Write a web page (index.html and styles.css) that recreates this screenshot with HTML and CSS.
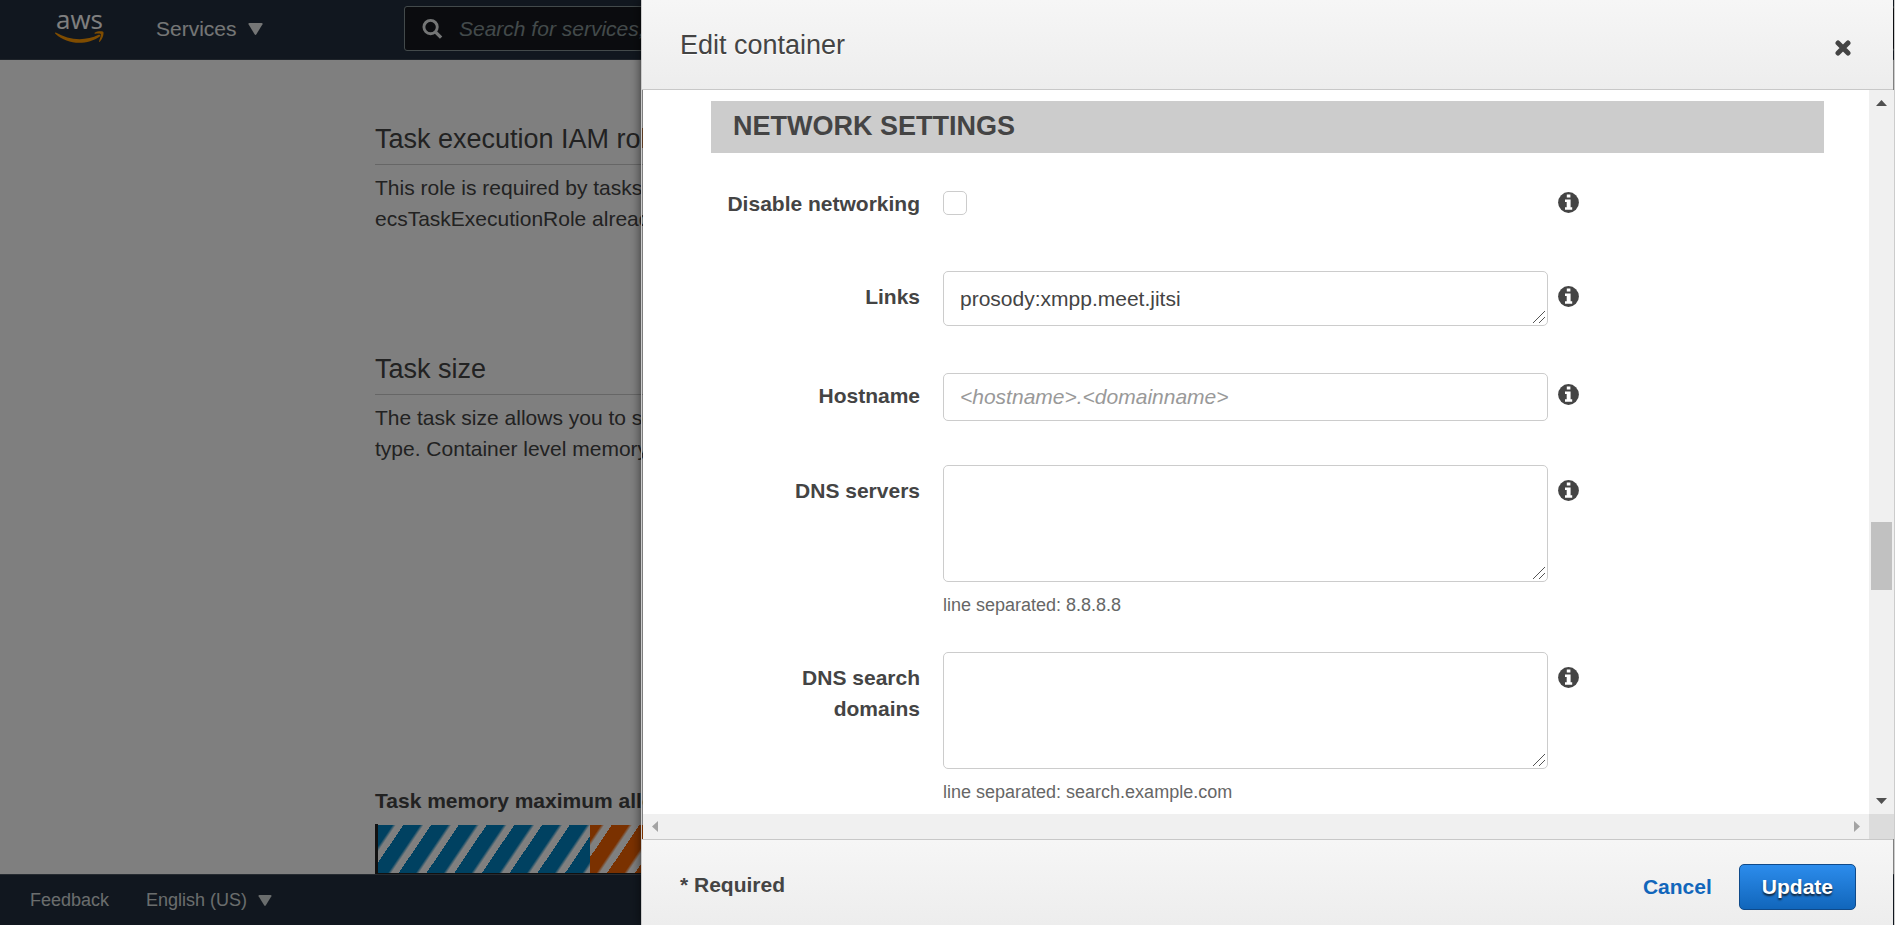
FILE: index.html
```html
<!DOCTYPE html>
<html lang="en">
<head>
<meta charset="utf-8">
<title>Edit container</title>
<meta name="viewport" content="width=device-width, initial-scale=1">
<link rel="stylesheet" href="styles.css">
</head>
<body>
<svg class="defs" aria-hidden="true">
  <symbol id="info" viewBox="0 0 21 21">
    <circle cx="10.500" cy="10.500" r="10.400" fill="#444"/>
    <path d="M8.800 2.600h3.600v3h-3.600zM7 7.400h5.600v7.800h1.600v2.600H7v-2.600h1.700V10H7z" fill="#fff"/>
  </symbol>
  <symbol id="caret" viewBox="0 0 15 12">
    <path d="M1.500 0h12q1.500 0 1 1.300L8.400 11.300q-.9 1.200-1.800 0L.5 1.300Q0 0 1.500 0z" fill="currentColor"/>
  </symbol>
</svg>

<div class="console">
  <header class="topbar">
    <a class="logo" href="#" aria-label="AWS home">
      <span class="logo-text">aws</span>
      <svg class="logo-smile" viewBox="0 0 50 13" aria-hidden="true">
        <path d="M.8 1.500C14 9.500 31 10.500 44.500 3.800c1.400-.7 2.400.6 1.200 1.600C33 14.500 13 14.500.4 2.700-.3 1.900.1 1.100.8 1.500z" fill="#ff9900"/>
        <path d="M40.500 1.700c2.600-1.900 8-1.900 8.800-.9.800 1.200-.4 7-3.400 9.900-.7.600-1.300.3-1-.5.900-2.200 2.400-6.200 1.800-7.100-.6-.9-3.600-.7-5.600-.5-.8.100-1.200-.4-.6-.9z" fill="#ff9900"/>
      </svg>
    </a>
    <button class="nav-button" type="button">Services <svg class="caret"><use href="#caret"/></svg></button>
    <label class="search">
      <svg class="search-icon" viewBox="0 0 22 22" aria-hidden="true"><circle cx="9" cy="9" r="7" fill="none" stroke="currentColor" stroke-width="3"/><path d="M14 14l6 6" stroke="currentColor" stroke-width="3.400"/></svg>
      <input class="search-input" type="search" aria-label="Search" placeholder="Search for services, features, marketplace products, and docs">
    </label>
  </header>

  <main class="page">
    <section class="block block-role">
      <h2 class="block-title">Task execution IAM role</h2>
      <p class="block-text">This role is required by tasks<br>ecsTaskExecutionRole already</p>
    </section>
    <section class="block block-size">
      <h2 class="block-title">Task size</h2>
      <p class="block-text">The task size allows you to set<br>type. Container level memory</p>
    </section>
    <section class="block">
      <h3 class="chart-title">Task memory maximum allocation</h3>
      <div class="chart"><div class="chart-used"></div><div class="chart-rest"></div></div>
    </section>
  </main>

  <footer class="bottombar">
    <a class="bottom-link" href="#">Feedback</a>
    <button class="bottom-link" type="button">English (US) <svg class="caret caret-small"><use href="#caret"/></svg></button>
  </footer>
</div>

<div class="backdrop"></div>

<div class="dialog" role="dialog" aria-labelledby="dialog-title">
  <header class="dialog-header">
    <h1 class="dialog-title" id="dialog-title">Edit container</h1>
    <button class="close" type="button" aria-label="Close">
      <svg class="close-icon" viewBox="0 0 16 16"><path d="M3 3l10 10M13 3L3 13" stroke="#444" stroke-width="5" stroke-linecap="round"/></svg>
    </button>
  </header>

  <div class="dialog-body">
    <form class="form" id="container-form">
      <h2 class="form-heading">NETWORK SETTINGS</h2>
      <div class="row row-check">
        <label class="label" for="disable">Disable networking</label>
        <div class="control"><input class="check" id="disable" type="checkbox"></div>
        <svg class="info"><use href="#info"/></svg>
      </div>
      <div class="row row-tall row-links">
        <label class="label" for="links">Links</label>
        <div class="control"><textarea class="field area area-short" id="links" rows="1">prosody:xmpp.meet.jitsi</textarea></div>
        <svg class="info"><use href="#info"/></svg>
      </div>
      <div class="row">
        <label class="label" for="hostname">Hostname</label>
        <div class="control"><input class="field" id="hostname" type="text" placeholder="&lt;hostname&gt;.&lt;domainname&gt;"></div>
        <svg class="info"><use href="#info"/></svg>
      </div>
      <div class="row row-tall row-hinted">
        <label class="label" for="dns">DNS servers</label>
        <div class="control"><textarea class="field area" id="dns"></textarea><p class="hint">line separated: 8.8.8.8</p></div>
        <svg class="info"><use href="#info"/></svg>
      </div>
      <div class="row row-tall row-hinted">
        <label class="label" for="domains">DNS search domains</label>
        <div class="control"><textarea class="field area" id="domains"></textarea><p class="hint">line separated: search.example.com</p></div>
        <svg class="info"><use href="#info"/></svg>
      </div>
    </form>
    <div class="vbar" aria-hidden="true">
      <svg class="bar-arrow" viewBox="0 0 25 25"><path d="M7 16L12.500 10 18 16z" fill="#505050"/></svg>
      <div class="vbar-before"></div>
      <div class="vbar-thumb"></div>
      <div class="vbar-after"></div>
      <svg class="bar-arrow" viewBox="0 0 25 25"><path d="M7 9h11l-5.500 6z" fill="#505050"/></svg>
    </div>
    <div class="hbar" aria-hidden="true">
      <svg class="bar-arrow" viewBox="0 0 25 25"><path d="M15 7v11L9 12.500z" fill="#a3a3a3"/></svg>
      <svg class="bar-arrow" viewBox="0 0 25 25"><path d="M10 7v11l6-5.500z" fill="#a3a3a3"/></svg>
    </div>
    <div class="corner"></div>
  </div>

  <footer class="dialog-footer">
    <span class="required">* Required</span>
    <div class="actions">
      <button class="cancel" type="button">Cancel</button>
      <button class="update" type="submit" form="container-form">Update</button>
    </div>
  </footer>
</div>
</body>
</html>
```
FILE: styles.css
```css
* { box-sizing: border-box; }

body {
  margin: 0;
  overflow: hidden;
  font: 21px/31px "Liberation Sans", Arial, sans-serif;
  color: #444;
}

h1, h2, h3, p { margin: 0; }
button { padding: 0; border: 0; background: none; font: inherit; color: inherit; }
a { color: inherit; text-decoration: none; }
.defs { position: absolute; width: 0; height: 0; }

/* Console behind the dialog */
.console { display: flex; flex-direction: column; height: 100vh; background: #fff; }

.topbar {
  display: flex;
  align-items: flex-start;
  flex: none;
  height: 60px;
  padding: 6px 0 0 55px;
  background: #232f3e;
  border-bottom: 1px solid #3d4653;
  color: #eaeded;
}
.logo { display: flex; flex-direction: column; align-items: center; width: 49px; }
.logo-text { height: 25px; font: 26px/27px "Open Sans", "Noto Sans", sans-serif; color: #fff; }
.logo-smile { width: 49px; height: 13px; }
.nav-button { display: flex; align-items: center; gap: 11px; width: 248px; margin-left: 52px; height: 45px; }
.caret { width: 15px; height: 12px; }
.search {
  display: flex;
  align-items: center;
  gap: 16px;
  flex: 1;
  height: 45px;
  padding-left: 17px;
  border: 1px solid #879596;
  border-radius: 3px;
  background: #16191f;
}
.search-icon { flex: none; width: 21px; height: 22px; }
.search-input { flex: 1; border: 0; padding: 0; background: none; font: inherit; }
.search-input::placeholder { color: #879596; font-style: italic; opacity: 1; }

.page { flex: 1; min-height: 0; padding: 61px 40px 0 375px; overflow: hidden; }
.block-role { height: 230px; }
.block-size { height: 434px; }
.block-title { padding: 1px 0 7px; border-bottom: 1px solid #ccc; font-weight: 400; font-size: 27px; line-height: 35px; }
.block-text { padding-top: 7px; white-space: nowrap; }
.chart-title { padding-bottom: 8px; font-size: 21px; line-height: 31px; }
.chart { display: flex; width: fit-content; border-left: 3px solid #222; border-bottom: 3px solid #222; }
.chart-used, .chart-rest { height: 49px; border-top: 1px solid #fff; }
.chart-used {
  width: 212px;
  background: repeating-linear-gradient(124deg, #0083c2 0 12px, #fff 15px 21px, #0083c2 21px 23px);
}
.chart-rest {
  width: 400px;
  background: repeating-linear-gradient(124deg, #f56200 0 9px, #fff 12px 18px, #f56200 18px 23px);
}

.bottombar {
  display: flex;
  align-items: center;
  gap: 37px;
  flex: none;
  height: 51px;
  padding: 1px 0 0 30px;
  border-top: 1px solid #4d5663;
  background: #232f3e;
  color: #d5dbdb;
  font-size: 18px;
}
.bottom-link { display: flex; align-items: center; gap: 11px; }
.caret-small { width: 14px; height: 11px; }

.backdrop { position: fixed; inset: 0; background: rgba(0, 0, 0, .5); }

/* Dialog */
.dialog {
  position: fixed;
  top: 0;
  right: 0;
  bottom: 0;
  left: 641px;
  display: flex;
  flex-direction: column;
  border: solid #ccc;
  border-width: 0 1px;
  box-shadow: 0 0 10px rgba(0, 0, 0, .6);
}
.dialog-header {
  display: flex;
  align-items: center;
  justify-content: space-between;
  flex: none;
  height: 90px;
  margin-right: 1px;
  padding: 2px 42px 0 38px;
  border-bottom: 1px solid #c8c8c8;
  background: linear-gradient(#f6f6f6, #ededed);
}
.dialog-title { font-weight: 400; font-size: 27px; line-height: 35px; text-shadow: 0 1px 0 #fff; }
.close { display: flex; padding-top: 5px; }
.close-icon { width: 16px; height: 16px; }

.dialog-body {
  display: grid;
  grid-template: minmax(0, 1fr) 25px / minmax(0, 1fr) 25px;
  flex: 1;
  min-height: 0;
  margin-left: 1px;
  background: #fff;
}
.form { padding: 11px 45px 0 68px; overflow: hidden; }
.form-heading {
  margin-bottom: 28px;
  padding: 8px 22px 9px;
  background: #ccc;
  font-size: 27px;
  line-height: 35px;
}
.row {
  display: grid;
  grid-template-columns: 200px minmax(0, 618px) 21px;
  column-gap: 10px;
  margin: 0 0 44px 9px;
}
.row-check { min-height: 46px; }
.row-links { margin-bottom: 47px; }
.row-hinted { margin-bottom: 33px; }
.label { padding-top: 7px; font-weight: 700; text-align: right; }
.info { width: 21px; height: 21px; margin-top: 11px; }
.row-tall .label { padding-top: 10px; }
.row-tall .info { margin-top: 15px; }
.control { padding-left: 13px; }
.field {
  display: block;
  width: 100%;
  height: 48px;
  margin: 0;
  padding: 0 16px;
  border: 1px solid #ccc;
  border-radius: 5px;
  background: #fff;
  font: inherit;
  color: #444;
}
.field::placeholder { color: #999; font-style: italic; opacity: 1; }
.area { height: 117px; padding: 11px 16px; resize: both; }
.area-short { height: 55px; overflow: hidden; }
.area::-webkit-resizer {
  background: linear-gradient(135deg, transparent 47%, #555 47% 53%, transparent 53% 72%, #555 72% 78%, transparent 78%) 1px 1px / 12px 12px no-repeat;
}
.check {
  display: block;
  width: 24px;
  height: 24px;
  margin: 10px 0 0;
  appearance: none;
  border: 1px solid #ccc;
  border-radius: 5px;
  background: #fff;
}
.hint { padding-top: 10px; font-size: 18px; line-height: 27px; color: #666; }

.vbar { display: flex; flex-direction: column; background: #f0f0f0; }
.bar-arrow { flex: none; width: 25px; height: 25px; }
.vbar-before { flex: 407; }
.vbar-thumb { height: 68px; margin: 0 2px; background: #c1c1c1; }
.vbar-after { flex: 199; }
.hbar { display: flex; justify-content: space-between; background: #f0f0f0; }
.corner { background: #dcdcdc; }

.dialog-footer {
  display: flex;
  align-items: center;
  justify-content: space-between;
  flex: none;
  height: 86px;
  margin-right: 1px;
  padding: 9px 37px 0 38px;
  border-top: 1px solid #c8c8c8;
  background: linear-gradient(#f6f6f6, #ededed);
  font-weight: 700;
}
.required { padding-bottom: 5px; }
.actions { display: flex; align-items: center; gap: 27px; }
.cancel { padding-bottom: 2px; color: #1166bb; }
.update {
  height: 46px;
  padding: 0 22px 2px;
  border: 1px solid #0f4a8a;
  border-radius: 5px;
  background: linear-gradient(#2c8cec, #1166bb);
  color: #fff;
  text-shadow: 0 2px 2px #123;
}
```
